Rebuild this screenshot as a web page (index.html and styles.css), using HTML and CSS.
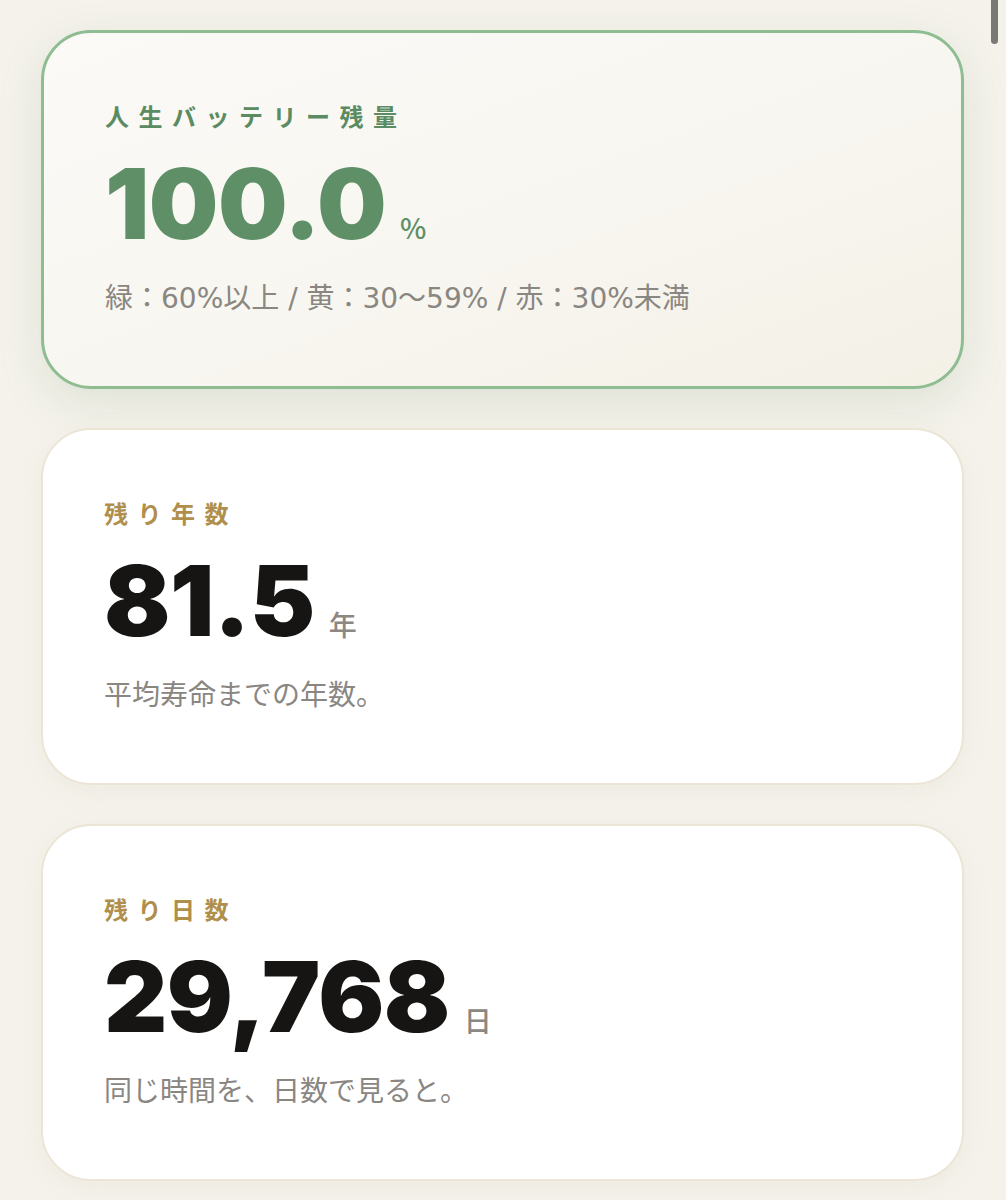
FILE: index.html
```html
<!DOCTYPE html>
<html lang="ja">
 <head>
  <meta charset="utf-8">
  <title>人生バッテリー</title>
  <link rel="stylesheet" href="styles.css">
 </head>
 <body>
  <div class="scrollThumb"></div>
  <div class="layout">

   <div class="card battery">
    <p class="cardTitle">人生バッテリー残量</p>
    <div class="valueRow">
     <span class="bigValue">100.0</span>
     <span class="unit">%</span>
    </div>
    <p class="note">緑：60%以上 / 黄：30〜59% / 赤：30%未満</p>
   </div>

   <div class="card">
    <p class="cardTitle gold">残り年数</p>
    <div class="valueRow">
     <span class="bigValue">81.5</span>
     <span class="unit">年</span>
    </div>
    <p class="note">平均寿命までの年数。</p>
   </div>

   <div class="card">
    <p class="cardTitle gold">残り日数</p>
    <div class="valueRow">
     <span class="bigValue">29,768</span>
     <span class="unit">日</span>
    </div>
    <p class="note">同じ時間を、日数で見ると。</p>
   </div>

  </div>
 </body>
</html>
```

FILE: styles.css
```css
body {
 margin: 0;
 background-color: #f4f2eb; /* фон страницы */
 font-family: Inter, "Noto Sans CJK JP", sans-serif;
}
.layout {
 display: flex;
 flex-direction: column;
 gap: 39px;
 padding: 30px 42px 30px 41px;
}
.card {
 background: #fff;
 border: 2px solid #ece5d6;
 border-radius: 50px;
 padding: 68px 60px 68px 61px;
 box-shadow: 0 6px 24px rgba(200, 190, 160, 0.12);
}
.battery {
 border: 3px solid #8dbd91;
 background: linear-gradient(160deg, #fbfaf7 0%, #f8f6f0 55%, #f3f0e6 100%);
 box-shadow: 0 14px 40px rgba(150, 175, 140, 0.22);
}
.cardTitle {
 margin: 0;
 font-family: "Noto Sans CJK JP", sans-serif;
 font-size: 24px;
 line-height: 29px;
 font-weight: 700;
 letter-spacing: 9.5px;
 color: #5b8b62;
}
.gold { color: #b08f4c; }
.valueRow {
 display: flex;
 align-items: baseline;
 gap: 14px;
 margin-top: 24px;
}
.bigValue {
 font-family: Inter, sans-serif;
 font-size: 98px;
 line-height: 100px;
 font-weight: 900;
 letter-spacing: -0.5px;
 color: #171513;
}
.battery .bigValue { color: #5e8f66; }
.unit {
 font-family: "Noto Sans CJK JP", sans-serif;
 font-size: 28px;
 font-weight: 500;
 color: #8b8782;
}
.battery .unit { color: #5e8f66; }
.note {
 margin: 25px 0 0;
 font-family: "DejaVu Sans", "Noto Sans CJK JP", sans-serif;
 font-size: 28px;
 line-height: 39px;
 color: #8a8681;
}
.scrollThumb {
 position: fixed;
 top: -6px;
 right: 8px;
 width: 7px;
 height: 50px;
 border-radius: 4px;
 background: #7b7976;
}
```
